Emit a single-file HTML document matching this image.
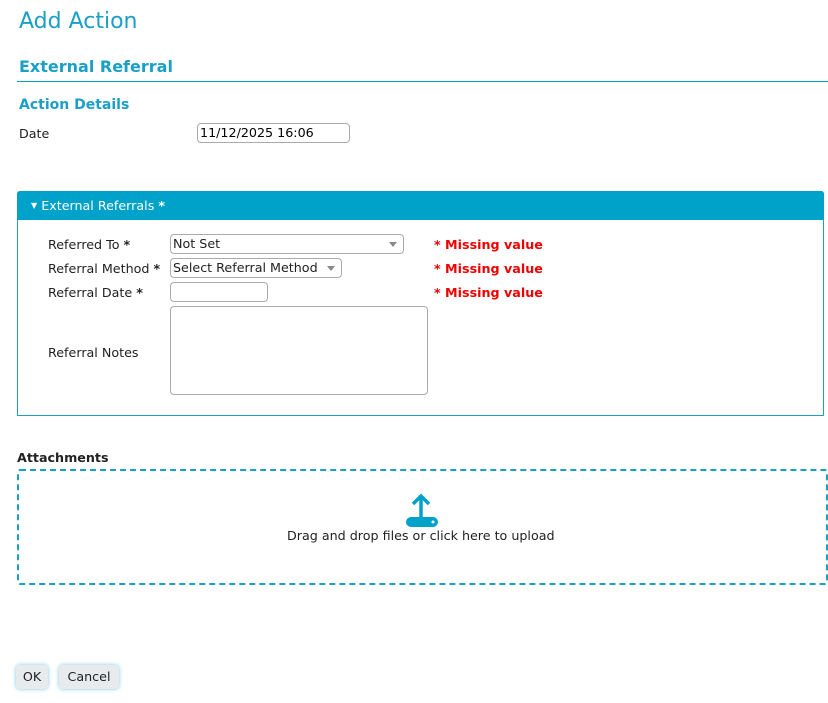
<!DOCTYPE html>
<html><head><style>
*{box-sizing:border-box}
body{margin:0;width:828px;height:703px;background:#fff;font-family:"DejaVu Sans",Verdana,sans-serif;font-size:12.7px;color:#222;position:relative;overflow:hidden}
.a{position:absolute;white-space:nowrap}
.in{position:absolute;border:1px solid #aaa;border-radius:4px;background:#fff;font-size:12.7px;padding:0 2px;line-height:18px}
.mv{color:#e00;font-weight:bold;font-size:12.7px}
.tri{position:absolute;right:6px;top:7px;width:0;height:0;border-left:4px solid transparent;border-right:4px solid transparent;border-top:5px solid #888}
.btn{position:absolute;top:665px;height:24px;background:#e8ebee;border-radius:4px;box-shadow:0 0 4px #7cc8e0;text-align:center;line-height:24px;font-size:12.7px}
</style></head><body>
<div class="a" style="left:19px;top:9px;font-size:22px;color:#1a9fc7">Add Action</div>
<div class="a" style="left:19px;top:57px;font-size:16px;font-weight:bold;color:#1a9fc7">External Referral</div>
<div style="position:absolute;left:17px;top:81px;width:811px;height:1px;background:#00a2c9"></div>
<div class="a" style="left:19px;top:97px;font-size:14px;font-weight:bold;color:#1a9fc7">Action Details</div>
<div class="a" style="left:19px;top:126px">Date</div>
<div class="in" style="left:197px;top:123px;width:153px;height:20px;color:#000">11/12/2025 16:06</div>

<div style="position:absolute;left:17px;top:191px;width:807px;height:225px;border:1px solid #1a9fc7;border-radius:3px 3px 0 0"></div>
<div style="position:absolute;left:17px;top:191px;width:807px;height:29px;background:#00a2c9;border-radius:3px 3px 0 0"></div>
<div class="a" style="left:31px;top:198px;color:#fff"><span style="font-size:8px;vertical-align:2px">▼</span> External Referrals <b>*</b></div>

<div class="a" style="left:48px;top:237px">Referred To <b>*</b></div>
<div class="in" style="left:170px;top:234px;width:234px;height:20px">Not Set<span class="tri"></span></div>
<div class="a mv" style="left:434px;top:237px">* Missing value</div>
<div class="a" style="left:48px;top:261px">Referral Method <b>*</b></div>
<div class="in" style="left:170px;top:258px;width:172px;height:20px">Select Referral Method<span class="tri"></span></div>
<div class="a mv" style="left:434px;top:261px">* Missing value</div>
<div class="a" style="left:48px;top:285px">Referral Date <b>*</b></div>
<div class="in" style="left:170px;top:282px;width:98px;height:20px"></div>
<div class="a mv" style="left:434px;top:285px">* Missing value</div>
<div class="a" style="left:48px;top:345px">Referral Notes</div>
<div class="in" style="left:170px;top:306px;width:258px;height:89px"></div>

<div class="a" style="left:17px;top:450px;font-weight:bold">Attachments</div>
<div style="position:absolute;left:17px;top:469px;width:811px;height:116px;border:2px dashed #1a9fc7;border-radius:3px"></div>
<svg style="position:absolute;left:400px;top:490px" width="44" height="42">
<rect x="6" y="27" width="32" height="10" rx="5" fill="#00a2c9"/>
<circle cx="33" cy="32" r="1.5" fill="#fff"/>
<path d="M21 31V7M13 14L21 6L29 14" stroke="#00a2c9" stroke-width="3.5" fill="none"/>
</svg>
<div class="a" style="left:287px;top:528px">Drag and drop files or click here to upload</div>

<div class="btn" style="left:16px;width:32px">OK</div>
<div class="btn" style="left:59px;width:60px">Cancel</div>
</body></html>
